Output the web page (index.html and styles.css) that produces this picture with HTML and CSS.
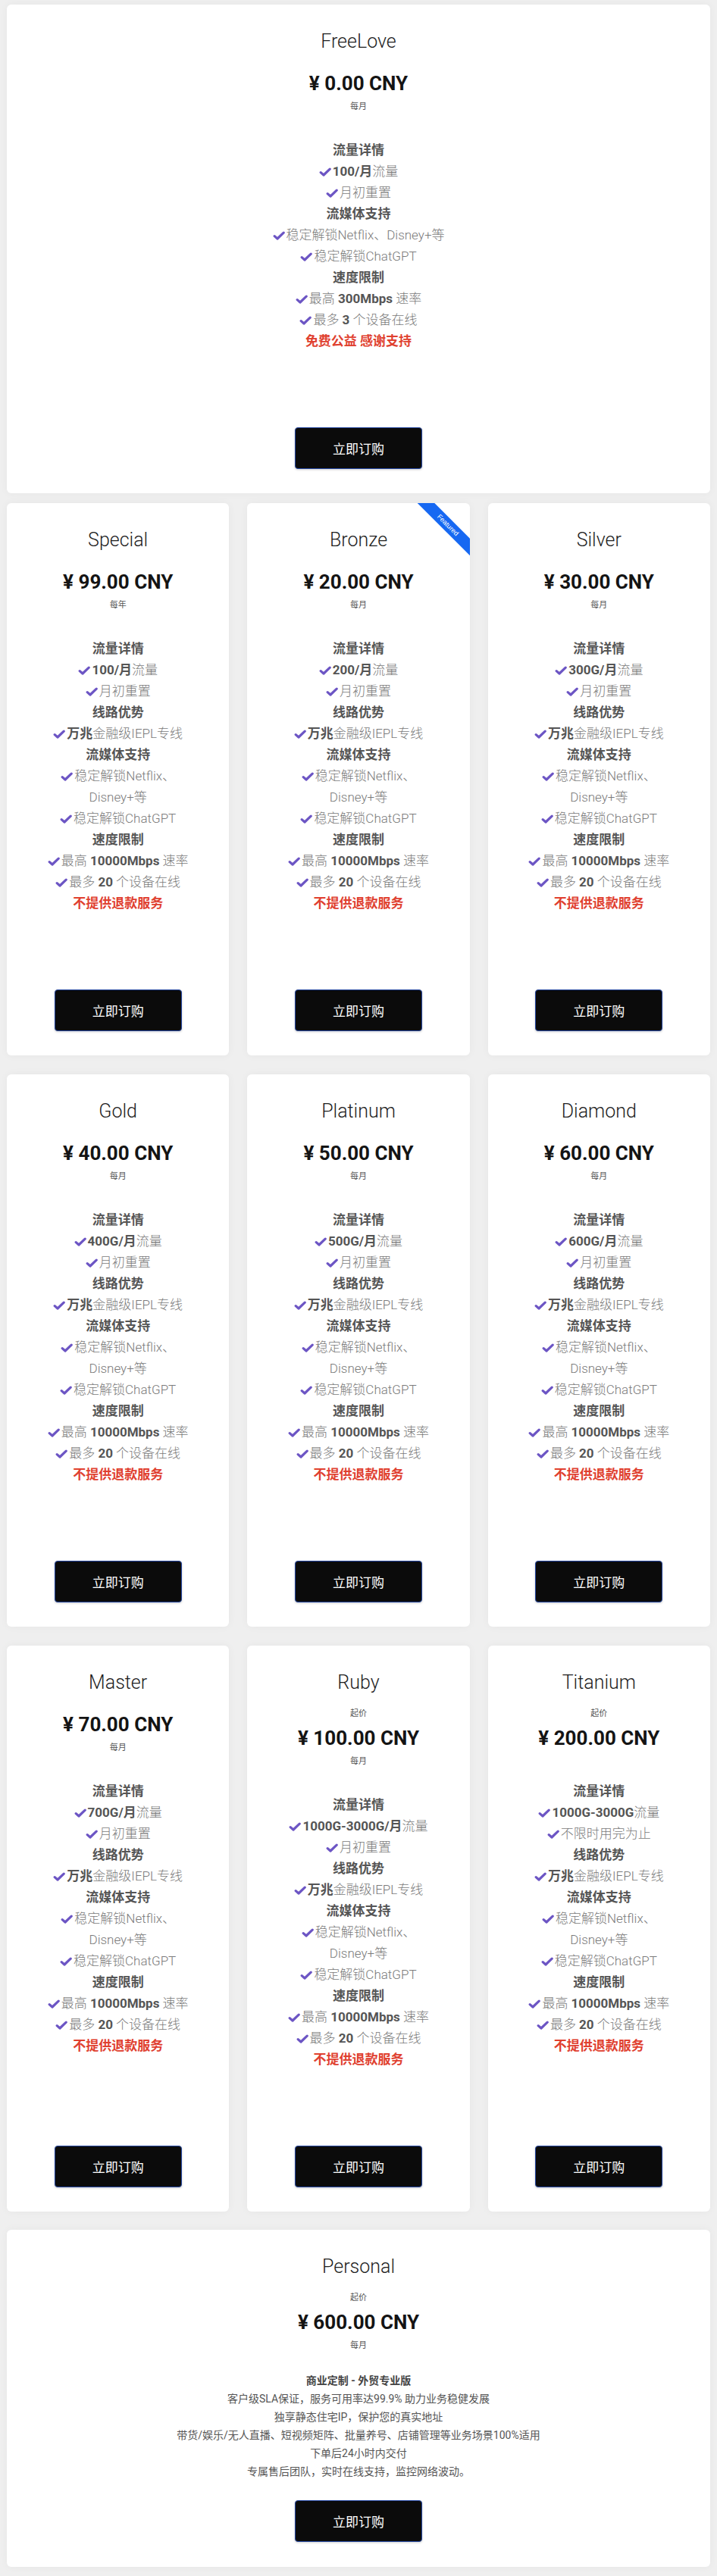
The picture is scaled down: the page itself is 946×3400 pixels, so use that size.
FILE: index.html
```html
<!DOCTYPE html>
<html lang="zh-CN">
<head>
<meta charset="utf-8">
<title>Plans</title>
<link rel="stylesheet" href="styles.css">
</head>
<body>
<svg class="defs" width="0" height="0" aria-hidden="true">
  <symbol id="chk" viewBox="0 0 16 12">
    <path d="M2.2 6.6 L6 10 L14.2 2.2" fill="none" stroke="currentColor" stroke-width="3.2" stroke-linecap="round" stroke-linejoin="round"/>
  </symbol>
</svg>
<div class="page">

  <div class="card card-top">
    <h3 class="title">FreeLove</h3>
    <div class="pricebox">
      <div class="price">¥ 0.00 CNY</div>
      <div class="unit">每月</div>
    </div>
    <ul class="features">
      <li class="head">流量详情</li>
      <li><svg class="chk"><use href="#chk"/></svg><b>100/月</b>流量</li>
      <li><svg class="chk"><use href="#chk"/></svg>月初重置</li>
      <li class="head">流媒体支持</li>
      <li><svg class="chk"><use href="#chk"/></svg>稳定解锁Netflix、Disney+等</li>
      <li><svg class="chk"><use href="#chk"/></svg>稳定解锁ChatGPT</li>
      <li class="head">速度限制</li>
      <li><svg class="chk"><use href="#chk"/></svg>最高 <b>300Mbps</b> 速率</li>
      <li><svg class="chk"><use href="#chk"/></svg>最多 <b>3</b> 个设备在线</li>
      <li class="red">免费公益 感谢支持</li>
    </ul>
    <a class="btn">立即订购</a>
  </div>

  <div class="grid">

    <div class="card">
      <h3 class="title">Special</h3>
      <div class="pricebox">
        <div class="price">¥ 99.00 CNY</div>
        <div class="unit">每年</div>
      </div>
      <ul class="features">
        <li class="head">流量详情</li>
        <li><svg class="chk"><use href="#chk"/></svg><b>100/月</b>流量</li>
        <li><svg class="chk"><use href="#chk"/></svg>月初重置</li>
        <li class="head">线路优势</li>
        <li><svg class="chk"><use href="#chk"/></svg><b>万兆</b>金融级IEPL专线</li>
        <li class="head">流媒体支持</li>
        <li><svg class="chk"><use href="#chk"/></svg>稳定解锁Netflix、Disney+等</li>
        <li><svg class="chk"><use href="#chk"/></svg>稳定解锁ChatGPT</li>
        <li class="head">速度限制</li>
        <li><svg class="chk"><use href="#chk"/></svg>最高 <b>10000Mbps</b> 速率</li>
        <li><svg class="chk"><use href="#chk"/></svg>最多 <b>20</b> 个设备在线</li>
        <li class="red">不提供退款服务</li>
      </ul>
      <a class="btn">立即订购</a>
    </div>

    <div class="card">
      <div class="ribbon">Featured</div>
      <h3 class="title">Bronze</h3>
      <div class="pricebox">
        <div class="price">¥ 20.00 CNY</div>
        <div class="unit">每月</div>
      </div>
      <ul class="features">
        <li class="head">流量详情</li>
        <li><svg class="chk"><use href="#chk"/></svg><b>200/月</b>流量</li>
        <li><svg class="chk"><use href="#chk"/></svg>月初重置</li>
        <li class="head">线路优势</li>
        <li><svg class="chk"><use href="#chk"/></svg><b>万兆</b>金融级IEPL专线</li>
        <li class="head">流媒体支持</li>
        <li><svg class="chk"><use href="#chk"/></svg>稳定解锁Netflix、Disney+等</li>
        <li><svg class="chk"><use href="#chk"/></svg>稳定解锁ChatGPT</li>
        <li class="head">速度限制</li>
        <li><svg class="chk"><use href="#chk"/></svg>最高 <b>10000Mbps</b> 速率</li>
        <li><svg class="chk"><use href="#chk"/></svg>最多 <b>20</b> 个设备在线</li>
        <li class="red">不提供退款服务</li>
      </ul>
      <a class="btn">立即订购</a>
    </div>

    <div class="card">
      <h3 class="title">Silver</h3>
      <div class="pricebox">
        <div class="price">¥ 30.00 CNY</div>
        <div class="unit">每月</div>
      </div>
      <ul class="features">
        <li class="head">流量详情</li>
        <li><svg class="chk"><use href="#chk"/></svg><b>300G/月</b>流量</li>
        <li><svg class="chk"><use href="#chk"/></svg>月初重置</li>
        <li class="head">线路优势</li>
        <li><svg class="chk"><use href="#chk"/></svg><b>万兆</b>金融级IEPL专线</li>
        <li class="head">流媒体支持</li>
        <li><svg class="chk"><use href="#chk"/></svg>稳定解锁Netflix、Disney+等</li>
        <li><svg class="chk"><use href="#chk"/></svg>稳定解锁ChatGPT</li>
        <li class="head">速度限制</li>
        <li><svg class="chk"><use href="#chk"/></svg>最高 <b>10000Mbps</b> 速率</li>
        <li><svg class="chk"><use href="#chk"/></svg>最多 <b>20</b> 个设备在线</li>
        <li class="red">不提供退款服务</li>
      </ul>
      <a class="btn">立即订购</a>
    </div>

    <div class="card">
      <h3 class="title">Gold</h3>
      <div class="pricebox">
        <div class="price">¥ 40.00 CNY</div>
        <div class="unit">每月</div>
      </div>
      <ul class="features">
        <li class="head">流量详情</li>
        <li><svg class="chk"><use href="#chk"/></svg><b>400G/月</b>流量</li>
        <li><svg class="chk"><use href="#chk"/></svg>月初重置</li>
        <li class="head">线路优势</li>
        <li><svg class="chk"><use href="#chk"/></svg><b>万兆</b>金融级IEPL专线</li>
        <li class="head">流媒体支持</li>
        <li><svg class="chk"><use href="#chk"/></svg>稳定解锁Netflix、Disney+等</li>
        <li><svg class="chk"><use href="#chk"/></svg>稳定解锁ChatGPT</li>
        <li class="head">速度限制</li>
        <li><svg class="chk"><use href="#chk"/></svg>最高 <b>10000Mbps</b> 速率</li>
        <li><svg class="chk"><use href="#chk"/></svg>最多 <b>20</b> 个设备在线</li>
        <li class="red">不提供退款服务</li>
      </ul>
      <a class="btn">立即订购</a>
    </div>

    <div class="card">
      <h3 class="title">Platinum</h3>
      <div class="pricebox">
        <div class="price">¥ 50.00 CNY</div>
        <div class="unit">每月</div>
      </div>
      <ul class="features">
        <li class="head">流量详情</li>
        <li><svg class="chk"><use href="#chk"/></svg><b>500G/月</b>流量</li>
        <li><svg class="chk"><use href="#chk"/></svg>月初重置</li>
        <li class="head">线路优势</li>
        <li><svg class="chk"><use href="#chk"/></svg><b>万兆</b>金融级IEPL专线</li>
        <li class="head">流媒体支持</li>
        <li><svg class="chk"><use href="#chk"/></svg>稳定解锁Netflix、Disney+等</li>
        <li><svg class="chk"><use href="#chk"/></svg>稳定解锁ChatGPT</li>
        <li class="head">速度限制</li>
        <li><svg class="chk"><use href="#chk"/></svg>最高 <b>10000Mbps</b> 速率</li>
        <li><svg class="chk"><use href="#chk"/></svg>最多 <b>20</b> 个设备在线</li>
        <li class="red">不提供退款服务</li>
      </ul>
      <a class="btn">立即订购</a>
    </div>

    <div class="card">
      <h3 class="title">Diamond</h3>
      <div class="pricebox">
        <div class="price">¥ 60.00 CNY</div>
        <div class="unit">每月</div>
      </div>
      <ul class="features">
        <li class="head">流量详情</li>
        <li><svg class="chk"><use href="#chk"/></svg><b>600G/月</b>流量</li>
        <li><svg class="chk"><use href="#chk"/></svg>月初重置</li>
        <li class="head">线路优势</li>
        <li><svg class="chk"><use href="#chk"/></svg><b>万兆</b>金融级IEPL专线</li>
        <li class="head">流媒体支持</li>
        <li><svg class="chk"><use href="#chk"/></svg>稳定解锁Netflix、Disney+等</li>
        <li><svg class="chk"><use href="#chk"/></svg>稳定解锁ChatGPT</li>
        <li class="head">速度限制</li>
        <li><svg class="chk"><use href="#chk"/></svg>最高 <b>10000Mbps</b> 速率</li>
        <li><svg class="chk"><use href="#chk"/></svg>最多 <b>20</b> 个设备在线</li>
        <li class="red">不提供退款服务</li>
      </ul>
      <a class="btn">立即订购</a>
    </div>

    <div class="card">
      <h3 class="title">Master</h3>
      <div class="pricebox">
        <div class="price">¥ 70.00 CNY</div>
        <div class="unit">每月</div>
      </div>
      <ul class="features">
        <li class="head">流量详情</li>
        <li><svg class="chk"><use href="#chk"/></svg><b>700G/月</b>流量</li>
        <li><svg class="chk"><use href="#chk"/></svg>月初重置</li>
        <li class="head">线路优势</li>
        <li><svg class="chk"><use href="#chk"/></svg><b>万兆</b>金融级IEPL专线</li>
        <li class="head">流媒体支持</li>
        <li><svg class="chk"><use href="#chk"/></svg>稳定解锁Netflix、Disney+等</li>
        <li><svg class="chk"><use href="#chk"/></svg>稳定解锁ChatGPT</li>
        <li class="head">速度限制</li>
        <li><svg class="chk"><use href="#chk"/></svg>最高 <b>10000Mbps</b> 速率</li>
        <li><svg class="chk"><use href="#chk"/></svg>最多 <b>20</b> 个设备在线</li>
        <li class="red">不提供退款服务</li>
      </ul>
      <a class="btn">立即订购</a>
    </div>

    <div class="card">
      <h3 class="title">Ruby</h3>
      <div class="pricebox">
        <div class="from">起价</div>
        <div class="price">¥ 100.00 CNY</div>
        <div class="unit">每月</div>
      </div>
      <ul class="features">
        <li class="head">流量详情</li>
        <li><svg class="chk"><use href="#chk"/></svg><b>1000G-3000G/月</b>流量</li>
        <li><svg class="chk"><use href="#chk"/></svg>月初重置</li>
        <li class="head">线路优势</li>
        <li><svg class="chk"><use href="#chk"/></svg><b>万兆</b>金融级IEPL专线</li>
        <li class="head">流媒体支持</li>
        <li><svg class="chk"><use href="#chk"/></svg>稳定解锁Netflix、Disney+等</li>
        <li><svg class="chk"><use href="#chk"/></svg>稳定解锁ChatGPT</li>
        <li class="head">速度限制</li>
        <li><svg class="chk"><use href="#chk"/></svg>最高 <b>10000Mbps</b> 速率</li>
        <li><svg class="chk"><use href="#chk"/></svg>最多 <b>20</b> 个设备在线</li>
        <li class="red">不提供退款服务</li>
      </ul>
      <a class="btn">立即订购</a>
    </div>

    <div class="card">
      <h3 class="title">Titanium</h3>
      <div class="pricebox">
        <div class="from">起价</div>
        <div class="price">¥ 200.00 CNY</div>
      </div>
      <ul class="features">
        <li class="head">流量详情</li>
        <li><svg class="chk"><use href="#chk"/></svg><b>1000G-3000G</b>流量</li>
        <li><svg class="chk"><use href="#chk"/></svg>不限时用完为止</li>
        <li class="head">线路优势</li>
        <li><svg class="chk"><use href="#chk"/></svg><b>万兆</b>金融级IEPL专线</li>
        <li class="head">流媒体支持</li>
        <li><svg class="chk"><use href="#chk"/></svg>稳定解锁Netflix、Disney+等</li>
        <li><svg class="chk"><use href="#chk"/></svg>稳定解锁ChatGPT</li>
        <li class="head">速度限制</li>
        <li><svg class="chk"><use href="#chk"/></svg>最高 <b>10000Mbps</b> 速率</li>
        <li><svg class="chk"><use href="#chk"/></svg>最多 <b>20</b> 个设备在线</li>
        <li class="red">不提供退款服务</li>
      </ul>
      <a class="btn">立即订购</a>
    </div>

  </div>

  <div class="card card-personal">
    <h3 class="title">Personal</h3>
    <div class="pricebox">
      <div class="from">起价</div>
      <div class="price">¥ 600.00 CNY</div>
      <div class="unit">每月</div>
    </div>
    <ul class="features features-plain">
      <li class="head">商业定制 - 外贸专业版</li>
      <li>客户级SLA保证，服务可用率达99.9% 助力业务稳健发展</li>
      <li>独享静态住宅IP，保护您的真实地址</li>
      <li>带货/娱乐/无人直播、短视频矩阵、批量养号、店铺管理等业务场景100%适用</li>
      <li>下单后24小时内交付</li>
      <li>专属售后团队，实时在线支持，监控网络波动。</li>
    </ul>
    <a class="btn">立即订购</a>
  </div>

</div>
</body>
</html>
```

FILE: styles.css
```css
html, body {
  margin: 0;
  padding: 0;
}

body {
  background: #efefef;
  font-family: Roboto, "Noto Sans CJK SC", sans-serif;
  color: #333;
}

.defs {
  position: absolute;
  width: 0;
  height: 0;
  overflow: hidden;
}

.page {
  padding: 6px 9px 7px;
}

.card {
  position: relative;
  overflow: hidden;
  display: flex;
  flex-direction: column;
  background: #ffffff;
  border-radius: 6px;
  box-shadow: 0 0 12px rgba(0, 0, 0, 0.045);
  padding: 34px 40px 32px;
  text-align: center;
  box-sizing: border-box;
}

.card-top {
  margin-bottom: 13px;
}

.grid {
  display: grid;
  grid-template-columns: repeat(3, 1fr);
  gap: 25px 24px;
}

.card-personal {
  margin-top: 24px;
  padding-bottom: 33px;
}

.title {
  margin: 0;
  font-size: 25px;
  line-height: 30px;
  font-weight: 300;
  color: #1e1e1e;
}

.pricebox {
  margin-top: 24px;
}

.from {
  font-size: 11px;
  line-height: 18px;
  color: #555;
  margin: -7px 0 7px;
}

.price {
  font-size: 26px;
  line-height: 32px;
  font-weight: 700;
  color: #141414;
}

.unit {
  font-size: 11px;
  line-height: 18px;
  color: #555;
  margin: 6px 0 -6px;
}

.features {
  list-style: none;
  margin: 40px 0 100px;
  padding: 0;
  font-size: 17px;
  line-height: 28px;
  font-weight: 300;
  color: #7b7b7b;
}

.features b {
  font-weight: 700;
  color: #555;
}

.features .head {
  font-weight: 700;
  color: #555;
}

.features .red {
  font-weight: 700;
  color: #e0402f;
}

.chk {
  display: inline-block;
  width: 16px;
  height: 12px;
  margin-right: 2px;
  vertical-align: -1px;
  color: #6c55c4;
}

.features-plain {
  margin: 31px 0 26px;
  font-size: 14px;
  line-height: 24px;
  font-weight: 400;
  color: #555;
}

.features-plain .head {
  color: #444;
}

.btn {
  margin-top: auto;
  align-self: center;
  display: flex;
  align-items: center;
  justify-content: center;
  width: 168px;
  height: 55px;
  box-sizing: border-box;
  background: #0b0b0b;
  border: 1px solid #23459f;
  border-radius: 4px;
  color: #ffffff;
  font-size: 17px;
  box-shadow: 0 1px 3px rgba(0, 0, 0, 0.2);
  cursor: pointer;
}

.ribbon {
  position: absolute;
  top: 21px;
  right: -31px;
  width: 120px;
  height: 16px;
  line-height: 16px;
  background: #1668f2;
  color: #ffffff;
  font-family: "Liberation Sans", Arial, sans-serif;
  font-size: 9px;
  text-align: center;
  transform: rotate(45deg);
}
```
